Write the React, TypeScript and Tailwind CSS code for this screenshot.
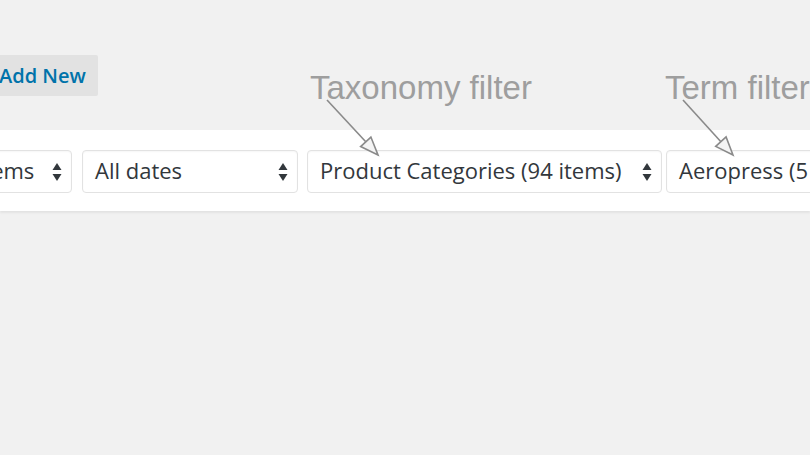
import React from "react";

function Arrows() {
  return (
    <svg width="10" height="20" viewBox="0 0 10 20" className="shrink-0">
      <path d="M5 1 L9.5 8 L0.5 8 Z" fill="#32373c" />
      <path d="M0.5 12 L9.5 12 L5 19 Z" fill="#32373c" />
    </svg>
  );
}

function Select({ label, className }: { label: string; className: string }) {
  return (
    <div
      className={`h-[43px] shrink-0 bg-white border border-[#e2e2e2] rounded-[4px] shadow-[inset_0_1px_2px_rgba(0,0,0,0.04)] flex items-center justify-between pl-[12px] pr-[9px] ${className}`}
    >
      <span className="text-[22px] text-[#32373c] whitespace-nowrap leading-none pb-[3px]">{label}</span>
      <Arrows />
    </div>
  );
}

function Pointer({ x1, y1, x2, y2 }: { x1: number; y1: number; x2: number; y2: number }) {
  const dx = x2 - x1;
  const dy = y2 - y1;
  const len = Math.hypot(dx, dy);
  const ux = dx / len;
  const uy = dy / len;
  const hl = 18;
  const hw = 7;
  const bx = x2 - ux * hl;
  const by = y2 - uy * hl;
  const px = -uy;
  const py = ux;
  const p1 = `${bx + px * hw},${by + py * hw}`;
  const p2 = `${bx - px * hw},${by - py * hw}`;
  return (
    <g stroke="#8a8a8a" strokeWidth="1.6" fill="none" strokeLinejoin="miter">
      <line x1={x1} y1={y1} x2={bx} y2={by} />
      <polygon points={`${x2},${y2} ${p1} ${p2}`} fill="#f4f4f4" />
    </g>
  );
}

export default function App() {
  return (
    <div
      className="relative w-[810px] h-[455px] overflow-hidden bg-[#f1f1f1]"
      style={{ fontFamily: '"Open Sans", "Noto Sans", sans-serif' }}
    >
      <div className="pt-[55px]">
        <div className="ml-[-12px] w-[110px] h-[41px] bg-[#e2e2e2] rounded-[2px] flex items-center pl-[11px]">
          <span className="text-[20px] font-semibold text-[#0073aa] leading-none">Add New</span>
        </div>
      </div>

      <div className="mt-[34px] h-[81px] bg-white shadow-[0_2px_2px_rgba(0,0,0,0.06)] pt-[20px] flex items-start">
        <div className="flex items-start ml-[-66px]">
          <Select label="All items" className="w-[138px] mr-[10px]" />
          <Select label="All dates" className="w-[216px] mr-[9px]" />
          <Select label="Product Categories (94 items)" className="w-[355px] mr-[4px]" />
          <Select label="Aeropress (5 items)" className="w-[260px]" />
        </div>
      </div>

      <div
        className="absolute left-[310px] top-[71px] text-[33px] text-[#9e9e9e] leading-none whitespace-nowrap"
        style={{ fontFamily: '"Liberation Sans", Arial, sans-serif' }}
      >
        Taxonomy filter
      </div>
      <div
        className="absolute left-[665px] top-[71px] text-[33px] text-[#9e9e9e] leading-none whitespace-nowrap"
        style={{ fontFamily: '"Liberation Sans", Arial, sans-serif' }}
      >
        Term filter
      </div>

      <svg className="absolute left-0 top-0" width="810" height="455">
        <Pointer x1={327} y1={100} x2={378} y2={155} />
        <Pointer x1={683} y1={100} x2={733} y2={155} />
      </svg>
    </div>
  );
}
